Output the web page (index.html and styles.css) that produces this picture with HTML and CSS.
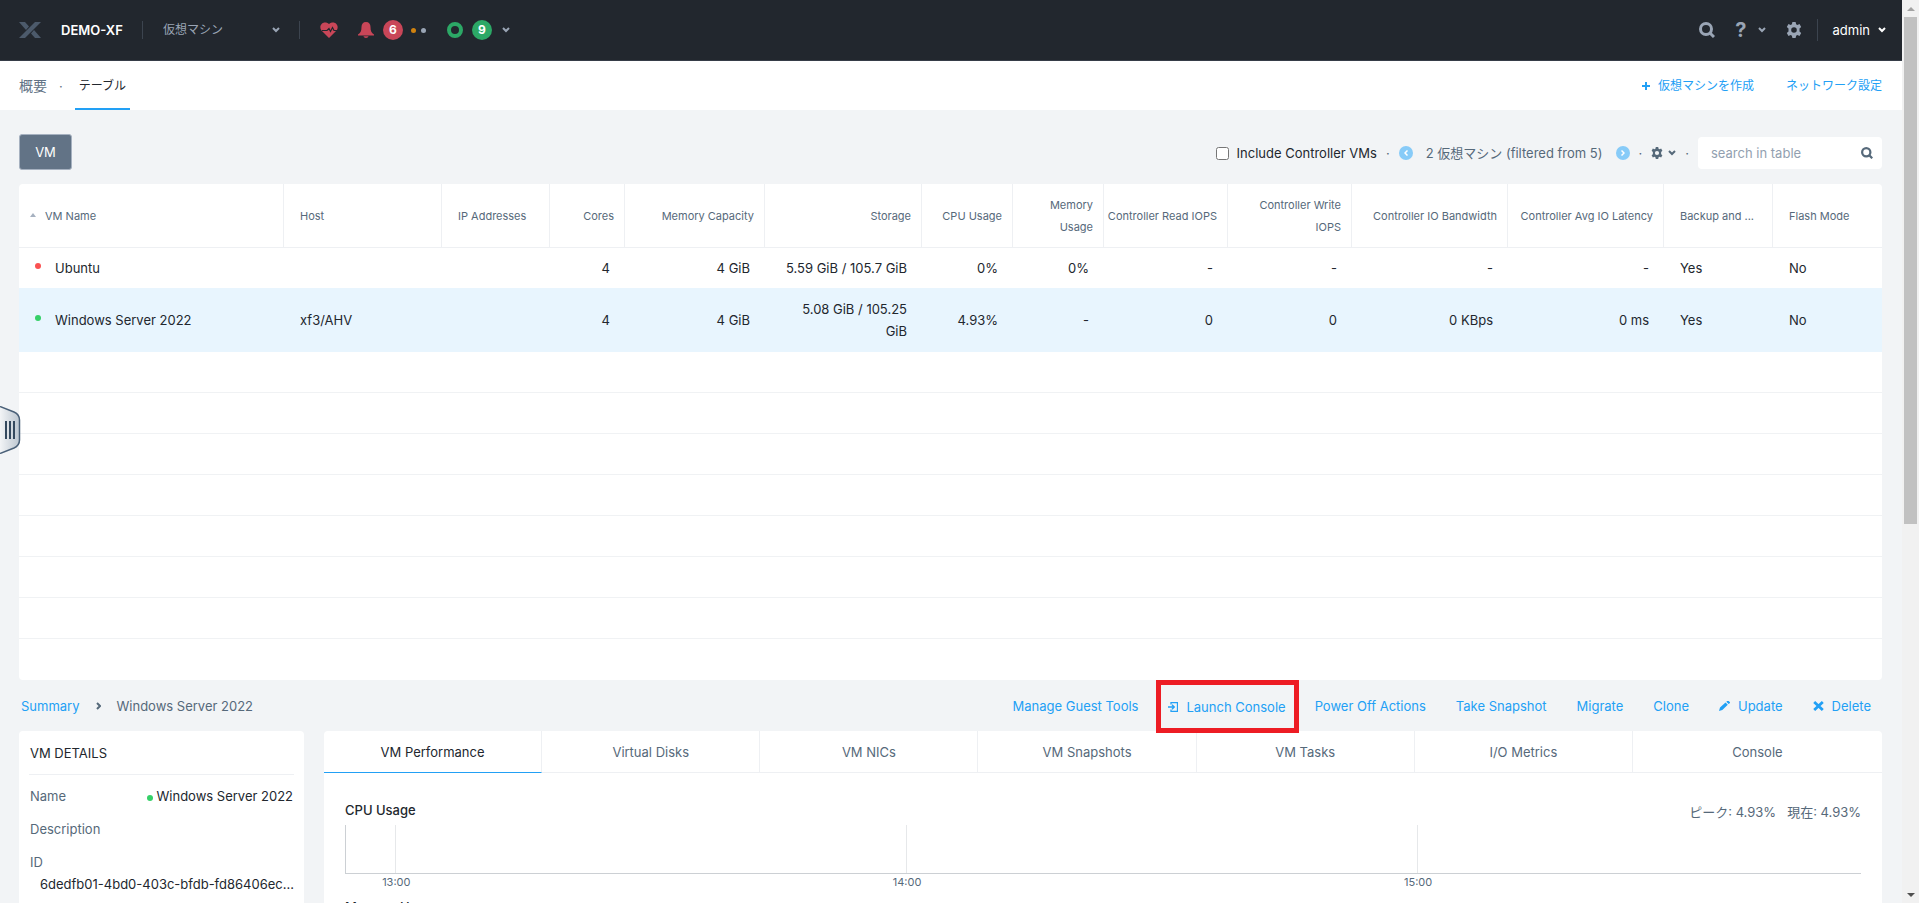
FILE: index.html
```html
<!DOCTYPE html>
<html lang="ja">
<head>
	<meta charset="utf-8">
	<title>DEMO-XF</title>
	<link rel="stylesheet" href="styles.css">
</head>
<body>
<svg class="sprite" aria-hidden="true">
	<symbol id="chevron" viewBox="0 0 8 6"><path d="M1 1l3 3 3-3" fill="none" stroke="currentColor" stroke-width="2"/></symbol>
	<symbol id="search" viewBox="0 0 16 16"><circle cx="7" cy="7" r="5.5" fill="none" stroke="currentColor" stroke-width="3"/><path d="M10.5 10.5l4.5 4.5" stroke="currentColor" stroke-width="3"/></symbol>
	<symbol id="gear" viewBox="0 0 16 16"><path fill="currentColor" fill-rule="evenodd" d="M6.4 0h3.2l.5 2.2 1.3.7 2.1-.8 1.7 2.8-1.7 1.6v3l1.7 1.6-1.7 2.8-2.1-.8-1.3.7-.5 2.2H6.4l-.5-2.2-1.3-.7-2.1.8L.8 11.1l1.7-1.6v-3L.8 4.9l1.7-2.8 2.1.8 1.3-.7zM8 5.2a2.8 2.8 0 1 0 0 5.6 2.8 2.8 0 0 0 0-5.6z"/></symbol>
</svg>

<div class="page">
	<header class="topbar">
		<svg class="logo" width="22" height="16" viewBox="0 0 22 16"><path d="M0 0h6l4 4.5-3 3.5zM16 0h6L6 16H0zM12 11.5l3-3.5 7 8h-6z" fill="#4c5a6b"/></svg>
		<strong class="cluster">DEMO-XF</strong>
		<i class="sep"></i>
		<select class="view" aria-label="View">
			<option>仮想マシン</option>
		</select>
		<svg class="chev" width="8" height="6"><use href="#chevron"/></svg>
		<i class="sep"></i>
		<svg class="heart" width="18" height="16" viewBox="0 0 18 16"><path d="M9 16L1.5 8.5C-2 4 3-2.5 9 2c6-4.5 11 2 7.5 6.5z" fill="#c94658"/><path d="M2 8.5h5l2-2 1.5 3 2-4 1.5 3H18" fill="none" stroke="#22272e" stroke-width="1.2"/></svg>
		<svg class="bell" width="16" height="16" viewBox="0 0 16 16"><path d="M8 0c3 0 4.5 2 4.5 5 0 4 1 6 3.5 7.5V13.5H0v-1C2.5 11 3.5 9 3.5 5c0-3 1.5-5 4.5-5zM5.500 14.3h5C10 16.5 6 16.5 5.5 14.3z" fill="#c94658"/></svg>
		<span class="badge red">6</span>
		<i class="dot orange"></i>
		<i class="dot grey"></i>
		<i class="ring"></i>
		<span class="badge green">9</span>
		<svg class="chev" width="8" height="6"><use href="#chevron"/></svg>
		<div class="tools">
			<button aria-label="Search"><svg width="16" height="16"><use href="#search"/></svg></button>
			<button class="help" aria-label="Help"><b>?</b><svg width="8" height="6"><use href="#chevron"/></svg></button>
			<button aria-label="Settings"><svg width="16" height="16"><use href="#gear"/></svg></button>
			<i class="sep"></i>
			<button class="user">admin <svg width="8" height="6"><use href="#chevron"/></svg></button>
		</div>
	</header>

	<nav class="subnav">
		<a class="tab" href="#">概要</a>
		<span>·</span>
		<a class="tab active" href="#">テーブル</a>
		<div class="links">
			<a href="#"><svg width="8" height="8" viewBox="0 0 8 8"><path d="M4 0v8M0 4h8" stroke="currentColor" stroke-width="2"/></svg>仮想マシンを作成</a>
			<a href="#">ネットワーク設定</a>
		</div>
	</nav>

	<main>
		<div class="toolbar">
			<button class="vm">VM</button>
			<div class="filters">
				<label class="include"><input type="checkbox"> Include Controller VMs</label>
				<span class="mid">·</span>
				<button class="pager" aria-label="Previous"><svg width="4" height="6" viewBox="0 0 4 6"><path d="M3.5.5L1 3l2.5 2.5" fill="none" stroke="#fff" stroke-width="1.5"/></svg></button>
				<span class="count">2 仮想マシン (filtered from 5)</span>
				<button class="pager" aria-label="Next"><svg width="4" height="6" viewBox="0 0 4 6"><path d="M.5.5L3 3 .5 5.5" fill="none" stroke="#fff" stroke-width="1.5"/></svg></button>
				<span class="mid">·</span>
				<button class="options" aria-label="Table options"><svg width="12" height="12"><use href="#gear"/></svg><svg width="8" height="6"><use href="#chevron"/></svg></button>
				<span class="mid">·</span>
				<div class="search">
					<input type="text" placeholder="search in table" aria-label="search in table">
					<svg width="12" height="12"><use href="#search"/></svg>
				</div>
			</div>
		</div>

		<table class="vms">
			<colgroup>
				<col class="w-name"><col class="w-host"><col class="w-ip"><col class="w-cores"><col class="w-mem"><col class="w-storage"><col class="w-cpu"><col class="w-cpu"><col class="w-iops"><col class="w-iops"><col class="w-io"><col class="w-io"><col class="w-backup"><col>
			</colgroup>
			<thead>
				<tr>
					<th class="sorted"><i class="asc"></i>VM Name</th>
					<th>Host</th>
					<th>IP Addresses</th>
					<th class="num">Cores</th>
					<th class="num">Memory Capacity</th>
					<th class="num">Storage</th>
					<th class="num">CPU Usage</th>
					<th class="num">Memory Usage</th>
					<th class="num tight">Controller Read IOPS</th>
					<th class="num">Controller Write IOPS</th>
					<th class="num">Controller IO Bandwidth</th>
					<th class="num tight">Controller Avg IO Latency</th>
					<th>Backup and ...</th>
					<th>Flash Mode</th>
				</tr>
			</thead>
			<tbody>
				<tr>
					<td class="name"><i class="state off"></i>Ubuntu</td>
					<td></td>
					<td></td>
					<td class="num">4</td>
					<td class="num">4 GiB</td>
					<td class="num">5.59 GiB / 105.7 GiB</td>
					<td class="num">0%</td>
					<td class="num">0%</td>
					<td class="num">-</td>
					<td class="num">-</td>
					<td class="num">-</td>
					<td class="num">-</td>
					<td>Yes</td>
					<td>No</td>
				</tr>
				<tr class="selected">
					<td class="name"><i class="state on"></i>Windows Server 2022</td>
					<td>xf3/AHV</td>
					<td></td>
					<td class="num">4</td>
					<td class="num">4 GiB</td>
					<td class="num">5.08 GiB / 105.25 GiB</td>
					<td class="num">4.93%</td>
					<td class="num">-</td>
					<td class="num">0</td>
					<td class="num">0</td>
					<td class="num">0 KBps</td>
					<td class="num">0 ms</td>
					<td>Yes</td>
					<td>No</td>
				</tr>
				<tr class="empty"><td colspan="14"></td></tr>
				<tr class="empty"><td colspan="14"></td></tr>
				<tr class="empty"><td colspan="14"></td></tr>
				<tr class="empty"><td colspan="14"></td></tr>
				<tr class="empty"><td colspan="14"></td></tr>
				<tr class="empty"><td colspan="14"></td></tr>
				<tr class="empty"><td colspan="14"></td></tr>
				<tr class="empty"><td colspan="14"></td></tr>
			</tbody>
		</table>

		<div class="actions">
			<a href="#">Summary</a>
			<svg class="crumb" width="5" height="8" viewBox="0 0 5 8"><path d="M1 1l3 3-3 3" fill="none" stroke="#56697a" stroke-width="2"/></svg>
			<span>Windows Server 2022</span>
			<div class="buttons">
				<a href="#">Manage Guest Tools</a>
				<a class="launch" href="#"><svg width="10" height="10" viewBox="0 0 10 10"><path d="M3 2.5V.5h6.5v9H3v-2M0 5h6M4 2.8L6.3 5 4 7.2" fill="none" stroke="currentColor" stroke-width="1.3"/></svg>Launch Console</a>
				<a href="#">Power Off Actions</a>
				<a href="#">Take Snapshot</a>
				<a href="#">Migrate</a>
				<a href="#">Clone</a>
				<a href="#"><svg width="11" height="10" viewBox="0 0 11 10"><path d="M0 10l1-3.5L6.5 1.5l2.3 2.3L3.3 9zM7.3.8L8.2 0h1.5L11 1.2v.7l-1.4 1.2z" fill="currentColor"/></svg>Update</a>
				<a href="#"><svg width="11" height="10" viewBox="0 0 11 10"><path d="M1.2 1l8.6 8M9.8 1L1.2 9" stroke="currentColor" stroke-width="2.8"/></svg>Delete</a>
			</div>
		</div>

		<div class="panels">
			<section class="details">
				<h2>VM DETAILS</h2>
				<dl>
					<div><dt>Name</dt><dd><i class="state on"></i>Windows Server 2022</dd></div>
					<div><dt>Description</dt><dd></dd></div>
					<div class="stacked"><dt>ID</dt><dd>6dedfb01-4bd0-403c-bfdb-fd86406ec...</dd></div>
				</dl>
			</section>
			<section class="performance">
				<nav class="tabs">
					<a class="active" href="#">VM Performance</a>
					<a href="#">Virtual Disks</a>
					<a href="#">VM NICs</a>
					<a href="#">VM Snapshots</a>
					<a href="#">VM Tasks</a>
					<a href="#">I/O Metrics</a>
					<a class="last" href="#">Console</a>
				</nav>
				<div class="chart">
					<div class="head"><h3>CPU Usage</h3><p><span>ピーク: 4.93%</span><span>現在: 4.93%</span></p></div>
					<div class="plot"><i class="t13"></i><i class="hour"></i><i class="hour"></i></div>
					<div class="axis"><span class="t13">13:00</span><span class="hour">14:00</span><span class="hour">15:00</span></div>
				</div>
				<div class="chart">
					<div class="head"><h3>Memory Usage</h3><p><span>ピーク: 0%</span><span>現在: 0%</span></p></div>
					<div class="plot"><i class="t13"></i><i class="hour"></i><i class="hour"></i></div>
				</div>
			</section>
		</div>
	</main>

	<button class="handle" aria-label="Open panel">
		<svg width="21" height="48" viewBox="0 0 21 48">
			<defs><linearGradient id="fade"><stop offset="0" stop-color="#f2f4f6"/><stop offset="1" stop-color="#bcc6d0"/></linearGradient></defs>
			<path d="M0 .5l14 5.5q5.5 2.5 5.5 8v20q0 5.5-5.5 8L0 47.5" fill="url(#fade)" stroke="#4a6078" stroke-width="1.5"/>
			<path d="M6 15v18M10 15v18M14 15v18" stroke="#34495e" stroke-width="2"/>
		</svg>
	</button>
</div>

<div class="scrollbar">
	<i class="up"></i>
	<div class="thumb"></div>
	<i class="down"></i>
</div>
</body>
</html>
```
FILE: styles.css
```css
* {
	box-sizing: border-box;
}
body {
	margin: 0;
	height: 100vh;
	display: flex;
	overflow: hidden;
	background: #f2f4f6;
	color: #22272e;
	font: 13px/22px Inter, "Noto Sans CJK JP", sans-serif;
}
a {
	color: #22a0f5;
	text-decoration: none;
}
button {
	padding: 0;
	border: 0;
	background: none;
	color: inherit;
	font: inherit;
}
svg {
	flex: none;
}
h2, h3, p, dl, dd {
	margin: 0;
	font-size: 13px;
	font-weight: 400;
}
.sprite {
	display: none;
}
.page {
	flex: 1;
	min-width: 0;
	position: relative;
	overflow: hidden;
}

/* top bar */
.topbar {
	display: flex;
	align-items: center;
	height: 61px;
	padding: 0 16px 0 19px;
	background: #22272e;
	border-bottom: 1px solid #363d47;
	color: #9aa5b5;
}
.cluster {
	width: 81px;
	margin-left: 20px;
	color: #fff;
	font-weight: 600;
}
.sep {
	width: 1px;
	height: 18px;
	background: #3c444f;
}
.view {
	width: 109px;
	margin-left: 20px;
	padding: 0;
	border: 0;
	appearance: none;
	background: none;
	color: inherit;
	font: inherit;
	font-size: 12px;
}
.chev + .sep {
	margin-left: 19px;
}
.heart {
	margin-left: 20px;
}
.bell {
	margin-left: 20px;
}
.badge {
	width: 20px;
	height: 20px;
	margin-left: 9px;
	border-radius: 50%;
	color: #fff;
	font-size: 12px;
	font-weight: 700;
	line-height: 20px;
	text-align: center;
}
.red {
	background: #c94658;
}
.green {
	margin-right: 10px;
	background: #2ca866;
}
.dot {
	width: 5px;
	height: 5px;
	margin-left: 8px;
	border-radius: 50%;
}
.orange {
	background: #d1820f;
}
.grey {
	margin-left: 5px;
	background: #9aa5b5;
}
.ring {
	width: 16px;
	height: 16px;
	margin-left: 21px;
	border: 4px solid #2ca866;
	border-radius: 50%;
}
.tools {
	display: flex;
	align-items: center;
	gap: 20px;
	margin-left: auto;
}
.tools button {
	display: flex;
	align-items: center;
}
.tools .sep {
	height: 22px;
	margin: 0 -5px;
}
.help {
	gap: 11px;
}
.help b {
	font-size: 20px;
}
.tools .user {
	gap: 8px;
	color: #fff;
}

/* sub navigation */
.subnav {
	display: flex;
	align-items: center;
	gap: 12px;
	height: 49px;
	padding: 0 20px 0 19px;
	background: #fff;
	color: #627386;
}
.tab {
	color: #627386;
	font-size: 14px;
	line-height: 49px;
}
.tab.active {
	height: 49px;
	padding: 0 4px;
	border-bottom: 2px solid #22a0f5;
	color: #22272e;
	font-size: 12px;
}
.links {
	display: flex;
	gap: 32px;
	margin-left: auto;
	font-size: 12px;
}
.links a {
	display: flex;
	align-items: center;
	gap: 8px;
}

/* table toolbar */
main {
	padding: 24px 20px 0 19px;
}
.toolbar {
	display: flex;
	align-items: center;
	justify-content: space-between;
	height: 36px;
	margin-bottom: 14px;
}
.vm {
	width: 53px;
	height: 36px;
	border: 1px solid #a6b1c0;
	border-radius: 3px;
	background: #627386;
	color: #fff;
}
.filters {
	display: flex;
	align-items: center;
	padding-top: 2px;
	color: #56697a;
}
.include {
	display: flex;
	align-items: center;
	gap: 8px;
	color: #22272e;
}
.include input {
	width: 13px;
	height: 13px;
	margin: 0;
}
.mid {
	margin: 0 9px;
}
.pager {
	display: flex;
	align-items: center;
	justify-content: center;
	width: 14px;
	height: 14px;
	border-radius: 50%;
	background: #87cbf8;
}
.count {
	margin: 0 13px;
}
.options {
	display: flex;
	align-items: center;
	gap: 5px;
}
.search {
	display: flex;
	align-items: center;
	width: 184px;
	height: 32px;
	padding: 0 9px 0 13px;
	border-radius: 4px;
	background: #fff;
}
.search input {
	flex: 1;
	min-width: 0;
	padding: 0;
	border: 0;
	outline: 0;
	font: inherit;
}
.search input::placeholder {
	color: #929fb0;
}

/* vm table */
.vms {
	width: 100%;
	table-layout: fixed;
	border-spacing: 0;
	border-radius: 4px;
	background: #fff;
}
.w-name { width: 265px; }
.w-host { width: 158px; }
.w-ip { width: 108px; }
.w-cores { width: 75px; }
.w-mem { width: 140px; }
.w-storage { width: 157px; }
.w-cpu { width: 91px; }
.w-iops { width: 124px; }
.w-io { width: 156px; }
.w-backup { width: 109px; }
.vms th {
	height: 64px;
	padding: 0 10px 0 16px;
	border-right: 1px solid #eef0f3;
	border-bottom: 1px solid #eef0f3;
	color: #56697a;
	font-size: 11px;
	font-weight: 400;
	text-align: left;
}
.vms th:last-child {
	border-right: 0;
}
.vms th.sorted {
	padding-left: 11px;
}
.vms th.tight {
	padding-left: 0;
}
.asc {
	display: inline-block;
	margin: 0 9px 3px 0;
	border: 3px solid transparent;
	border-top: 0;
	border-bottom: 4px solid #a6b1c0;
}
.vms td {
	height: 40px;
	padding: 9px 16px;
}
.vms .num {
	text-align: right;
}
.vms td.num {
	padding: 9px 15px 9px 16px;
}
.state {
	display: inline-block;
	width: 6px;
	height: 6px;
	border-radius: 50%;
}
.name .state {
	margin: 0 14px 4px 0;
}
.off {
	background: #fa5252;
}
.on {
	background: #36d068;
}
.selected td {
	height: 64px;
	background: #e8f5fe;
}
.vms .empty td {
	height: 41px;
	padding: 0;
	border-bottom: 1px solid #f0f2f4;
}
.vms .empty:last-child td {
	border-bottom: 0;
}

/* breadcrumb and actions */
.actions {
	display: flex;
	align-items: center;
	height: 51px;
	padding: 0 11px 0 2px;
	color: #56697a;
}
.crumb {
	margin: 0 16px;
}
.buttons {
	display: flex;
	align-items: center;
	gap: 30px;
	margin-left: auto;
}
.buttons a {
	display: flex;
	align-items: center;
	gap: 8px;
}
/* the frame runs a little over the tabs below */
.buttons .launch {
	position: relative;
	z-index: 1;
	height: 53px;
	margin: 2px -14px 0 -12px;
	padding: 0 8px 0 7px;
	border: 5px solid #ed1c24;
}

/* bottom panels */
.panels {
	display: flex;
	align-items: flex-start;
	gap: 20px;
}
.details, .performance {
	min-height: 220px;
	border-radius: 4px;
	background: #fff;
}
.details {
	width: 285px;
	padding: 0 10px;
}
.details h2 {
	height: 44px;
	padding-left: 1px;
	border-bottom: 1px solid #eef0f3;
	line-height: 44px;
}
.details dl {
	padding: 10px 1px 0;
}
.details dl div {
	display: flex;
	justify-content: space-between;
	margin-bottom: 11px;
}
.details dl .stacked {
	display: block;
}
.details .state {
	margin-right: 4px;
}
.details .stacked dd {
	padding-left: 10px;
	white-space: nowrap;
}
dt {
	color: #56697a;
}
.performance {
	flex: 1;
	min-width: 0;
}
.tabs {
	display: flex;
}
.tabs a {
	flex: 218;
	height: 42px;
	border-right: 1px solid #eef0f3;
	border-bottom: 1px solid #eef0f3;
	color: #56697a;
	line-height: 43px;
	text-align: center;
}
.tabs a.active {
	border-bottom-color: #22a0f5;
	color: #22272e;
}
.tabs a.last {
	flex: 250;
	border-right: 0;
}
.chart {
	height: 97px;
	padding: 0 21px;
}
.tabs + .chart {
	margin-top: 26px;
}
.head {
	display: flex;
	justify-content: space-between;
	height: 26px;
}
.head h3 {
	font-weight: 500;
}
.head p {
	display: flex;
	gap: 11px;
	padding-top: 2px;
	color: #56697a;
}
.plot {
	display: flex;
	height: 49px;
	border-left: 1px solid #ccd0d4;
	border-bottom: 1px solid #ccd0d4;
}
.plot i {
	border-right: 1px solid #e6e8ea;
}
.t13 {
	width: 3.33%;
}
.hour {
	width: 33.7%;
}
.axis {
	display: flex;
	margin: 0 -15px 0 15px;
	color: #56697a;
	font-size: 11px;
	line-height: 16px;
	text-align: right;
}

/* drawer handle, sits over the table edge */
.handle {
	position: absolute;
	left: 0;
	top: 406px;
	height: 48px;
}

/* page scrollbar */
.scrollbar {
	display: flex;
	flex-direction: column;
	align-items: center;
	width: 17px;
	padding: 7px 2px 6px;
	background: #f1f1f1;
}
.up {
	border: 4px solid transparent;
	border-top: 0;
	border-bottom: 4px solid #a3a3a3;
}
.thumb {
	width: 13px;
	height: 57%;
	margin: 6px 0 auto;
	background: #c1c1c1;
}
.down {
	border: 4px solid transparent;
	border-bottom: 0;
	border-top: 4px solid #505050;
}
```
